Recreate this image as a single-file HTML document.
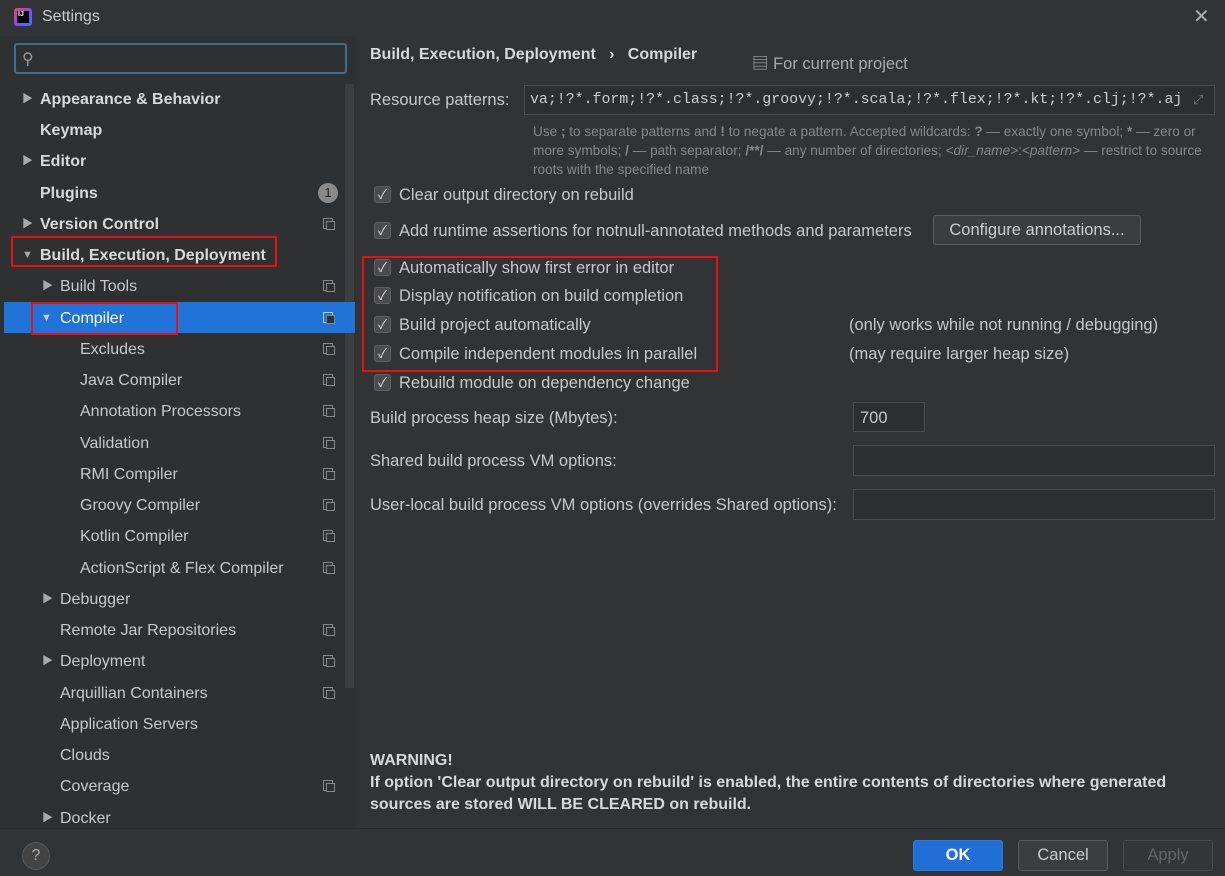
<!DOCTYPE html>
<html><head><meta charset="utf-8"><style>
*{margin:0;padding:0;box-sizing:border-box}
body{width:1225px;height:876px;background:#323335;font-family:"Liberation Sans","Noto Sans CJK SC",sans-serif;color:#c8c8c8;font-size:16px;position:relative;overflow:hidden}
.a{position:absolute;white-space:nowrap}
.left{position:absolute;left:0;top:36px;width:356px;height:792px;background:#2f3032}
.row{position:absolute;left:0;width:345px;height:31px;line-height:33px}
.b{font-weight:bold;color:#d8d8d8}
.tri{position:absolute;font-size:11px;color:#aaa}
.ci{position:absolute;left:323px;top:10px;width:10px;height:11px;border:1px solid #888;}
.ci:after{content:"";position:absolute;left:2px;top:2px;width:7px;height:7px;border:1px solid #888;background:#2f3032}
.cb{position:absolute;width:17px;height:17px;border-radius:3px;background:#4a4c4e;border:1px solid #5e6062;color:#ddd;font-size:13px;line-height:15px;text-align:center}
.red{position:absolute;border:2px solid #e81010}
.input{position:absolute;background:#2d2e30;border:1px solid #4a4b4d}
.btn{position:absolute;border:1px solid #5a5c5e;background:#3b3d3f;border-radius:3px;text-align:center;color:#ccc}
.r{font-size:16.5px}
</style></head><body>
<div class="a" style="left:14px;top:8px;width:18px;height:18px;background:linear-gradient(135deg,#fc3c6a,#7b4dff 60%,#2a7bff);border-radius:3px"></div>
<div class="a" style="left:17px;top:11px;width:12px;height:12px;background:#000;color:#fff;font-size:7px;font-weight:bold;line-height:8px;padding-left:1px">IJ</div>
<div class="a" style="left:42px;top:8px;font-size:16px;color:#ccc">Settings</div>
<div class="a" style="left:1193px;top:4px;font-size:20px;color:#aaa">✕</div>

<div class="left"></div>
<div class="a" style="left:14px;top:43px;width:333px;height:31px;border:2px solid #3d6e94;border-radius:3px;background:#2e3032"></div>
<div class="a" style="left:22px;top:49px;font-size:16px;color:#999">⚲</div>
<div class="a" style="left:345px;top:84px;width:9px;height:604px;background:#3c3e40"></div>

<div class="row" style="top:302px;left:4px;width:351px;background:#1f73d9"></div>

<div class="row" style="top:83px"><span class="tri" style="left:22px">▶</span><span class="a b" style="left:40px">Appearance &amp; Behavior</span></div>
<div class="row" style="top:114px"><span class="a b" style="left:40px">Keymap</span></div>
<div class="row" style="top:145px"><span class="tri" style="left:22px">▶</span><span class="a b" style="left:40px">Editor</span></div>
<div class="row" style="top:177px"><span class="a b" style="left:40px">Plugins</span><span class="a" style="left:318px;top:6px;width:20px;height:20px;border-radius:10px;background:#8a8a8a;color:#222;line-height:20px;text-align:center;font-size:13px">1</span></div>
<div class="row" style="top:208px"><span class="tri" style="left:22px">▶</span><span class="a b" style="left:40px">Version Control</span><span class="ci"></span></div>
<div class="row" style="top:239px"><span class="tri" style="left:22px">▼</span><span class="a b" style="left:40px">Build, Execution, Deployment</span></div>
<div class="row" style="top:270px"><span class="tri" style="left:42px">▶</span><span class="a" style="left:60px">Build Tools</span><span class="ci"></span></div>
<div class="row" style="top:302px;color:#fff"><span class="tri" style="left:41px;color:#ccc">▼</span><span class="a" style="left:60px">Compiler</span><span class="ci" style="border-color:#bcd"></span></div>
<div class="row" style="top:333px"><span class="a" style="left:80px">Excludes</span><span class="ci"></span></div>
<div class="row" style="top:364px"><span class="a" style="left:80px">Java Compiler</span><span class="ci"></span></div>
<div class="row" style="top:395px"><span class="a" style="left:80px">Annotation Processors</span><span class="ci"></span></div>
<div class="row" style="top:427px"><span class="a" style="left:80px">Validation</span><span class="ci"></span></div>
<div class="row" style="top:458px"><span class="a" style="left:80px">RMI Compiler</span><span class="ci"></span></div>
<div class="row" style="top:489px"><span class="a" style="left:80px">Groovy Compiler</span><span class="ci"></span></div>
<div class="row" style="top:520px"><span class="a" style="left:80px">Kotlin Compiler</span><span class="ci"></span></div>
<div class="row" style="top:552px"><span class="a" style="left:80px">ActionScript &amp; Flex Compiler</span><span class="ci"></span></div>
<div class="row" style="top:583px"><span class="tri" style="left:42px">▶</span><span class="a" style="left:60px">Debugger</span></div>
<div class="row" style="top:614px"><span class="a" style="left:60px">Remote Jar Repositories</span><span class="ci"></span></div>
<div class="row" style="top:645px"><span class="tri" style="left:42px">▶</span><span class="a" style="left:60px">Deployment</span><span class="ci"></span></div>
<div class="row" style="top:677px"><span class="a" style="left:60px">Arquillian Containers</span><span class="ci"></span></div>
<div class="row" style="top:708px"><span class="a" style="left:60px">Application Servers</span></div>
<div class="row" style="top:739px"><span class="a" style="left:60px">Clouds</span></div>
<div class="row" style="top:770px"><span class="a" style="left:60px">Coverage</span><span class="ci"></span></div>
<div class="row" style="top:802px"><span class="tri" style="left:42px">▶</span><span class="a" style="left:60px">Docker</span></div>

<div class="red" style="left:11px;top:236px;width:266px;height:31px"></div>
<div class="red" style="left:31px;top:302px;width:147px;height:33px"></div>

<div class="a b" style="left:370px;top:46px">Build, Execution, Deployment &nbsp;&nbsp;›&nbsp;&nbsp; Compiler</div>
<div class="a r" style="left:752px;top:50px;color:#aaa">▤ For current project</div>

<div class="a r" style="left:370px;top:91px">Resource patterns:</div>
<div class="input" style="left:524px;top:85px;width:691px;height:30px"></div>
<div class="a" style="left:530px;top:92px;font-family:'Liberation Mono',monospace;font-size:14.9px;color:#ccc">va;!?*.form;!?*.class;!?*.groovy;!?*.scala;!?*.flex;!?*.kt;!?*.clj;!?*.aj</div>
<div class="a" style="left:1193px;top:92px;color:#777;font-size:13px">⤢</div>
<div class="a" style="left:533px;top:122px;font-size:13.6px;color:#888;line-height:19px;white-space:normal;width:685px">Use <b>;</b> to separate patterns and <b>!</b> to negate a pattern. Accepted wildcards: <b>?</b> — exactly one symbol; <b>*</b> — zero or more symbols; <b>/</b> — path separator; <b>/**/</b> — any number of directories; <i>&lt;dir_name&gt;</i>:<i>&lt;pattern&gt;</i> — restrict to source roots with the specified name</div>

<div class="cb" style="left:374px;top:186px">✓</div><div class="a r" style="left:399px;top:186px">Clear output directory on rebuild</div>
<div class="cb" style="left:374px;top:222px">✓</div><div class="a r" style="left:399px;top:222px">Add runtime assertions for notnull-annotated methods and parameters</div>
<div class="btn r" style="left:933px;top:215px;width:208px;height:30px;line-height:28px">Configure annotations...</div>
<div class="cb" style="left:374px;top:259px">✓</div><div class="a r" style="left:399px;top:259px">Automatically show first error in editor</div>
<div class="cb" style="left:374px;top:287px">✓</div><div class="a r" style="left:399px;top:287px">Display notification on build completion</div>
<div class="cb" style="left:374px;top:316px">✓</div><div class="a r" style="left:399px;top:316px">Build project automatically</div>
<div class="a r" style="left:849px;top:316px">(only works while not running / debugging)</div>
<div class="cb" style="left:374px;top:345px">✓</div><div class="a r" style="left:399px;top:345px">Compile independent modules in parallel</div>
<div class="a r" style="left:849px;top:345px">(may require larger heap size)</div>
<div class="cb" style="left:374px;top:374px">✓</div><div class="a r" style="left:399px;top:374px">Rebuild module on dependency change</div>
<div class="red" style="left:362px;top:256px;width:356px;height:116px"></div>

<div class="a r" style="left:370px;top:409px">Build process heap size (Mbytes):</div>
<div class="input" style="left:853px;top:402px;width:72px;height:30px"></div>
<div class="a r" style="left:860px;top:409px">700</div>
<div class="a r" style="left:370px;top:452px">Shared build process VM options:</div>
<div class="input" style="left:853px;top:445px;width:362px;height:31px"></div>
<div class="a r" style="left:370px;top:496px">User-local build process VM options (overrides Shared options):</div>
<div class="input" style="left:853px;top:489px;width:362px;height:31px"></div>

<div class="a b" style="left:370px;top:750px;line-height:22px">WARNING!<br>If option 'Clear output directory on rebuild' is enabled, the entire contents of directories where generated<br>sources are stored WILL BE CLEARED on rebuild.</div>

<div class="a" style="left:0;top:828px;width:1225px;height:1px;background:#2a2a2a"></div>
<div class="a" style="left:22px;top:842px;width:28px;height:28px;border-radius:14px;background:#444;border:1px solid #555;text-align:center;line-height:26px;color:#aaa;font-size:16px">?</div>
<div class="btn r" style="left:913px;top:840px;width:90px;height:31px;line-height:29px;background:#1f6fd6;border-color:#2b7be0;color:#fff;font-weight:bold">OK</div>
<div class="btn r" style="left:1018px;top:840px;width:90px;height:31px;line-height:29px">Cancel</div>
<div class="btn r" style="left:1123px;top:840px;width:90px;height:31px;line-height:29px;background:#333537;border-color:#48494b;color:#666">Apply</div>
</body></html>
